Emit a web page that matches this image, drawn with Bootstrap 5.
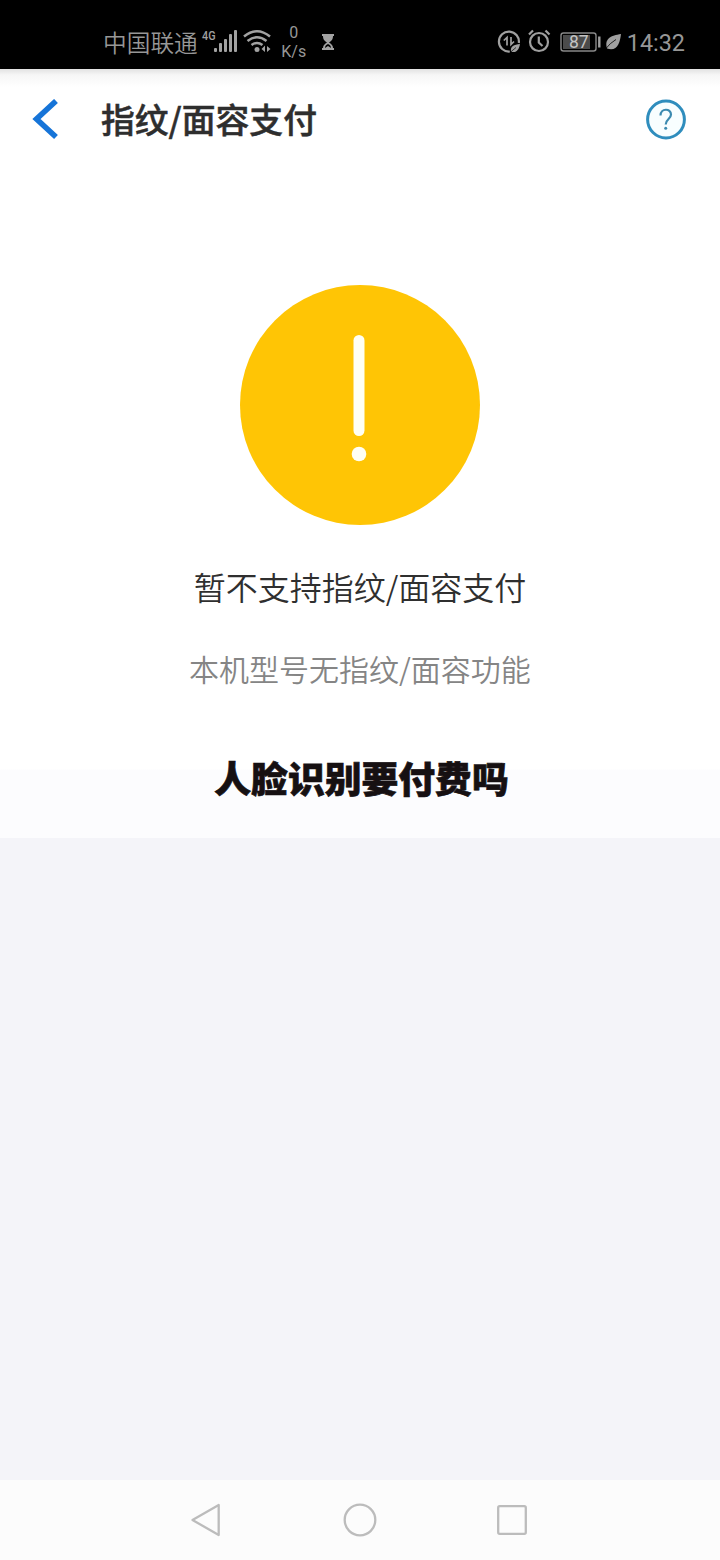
<!DOCTYPE html>
<html lang="zh-CN">
<head>
<meta charset="utf-8">
<meta name="viewport" content="width=device-width, initial-scale=1">
<title>指纹/面容支付</title>
<link href="https://cdn.jsdelivr.net/npm/bootstrap@5.3.0/dist/css/bootstrap.min.css" rel="stylesheet">
<style>
body { font-family: "Noto Sans CJK SC", sans-serif; background: #f4f4f9; height: 1560px; overflow: hidden; }
svg { display: block; flex: none; }
.status { height: 69px; background: #000; color: #979797; padding: 0 35px 0 103px; line-height: 1; }
.carrier { font-size: 23.7px; font-weight: 350; line-height: 36px; margin-top: 24px; }
.signals { margin-left: 3px; }
.rate { font: 16px/19px Roboto, sans-serif; width: 30px; margin: 23px 0 0 6px; }
.hourglass { margin-left: 12px; }
.clock { font: 23.4px/30px Roboto, sans-serif; margin: 28px 0 0 4px; }
.panel { height: 769px; background: linear-gradient(#e2e2e2 0, #f6f6f6 6px, #fff 18px, #fff 700px, #fcfcfe 701px, #fcfcfe 100%); }
.topbar { height: 101px; padding: 0 34px 0 32px; }
.heading { font-size: 33.8px; font-weight: 500; -webkit-text-stroke: .5px #2e2e2e; line-height: 50px; color: #2e2e2e; margin: -2px 0 0 41px; }
.notice { margin-top: 115px; }
.message { font-size: 32px; font-weight: 350; line-height: 48px; color: #2f2f2f; margin: 37px 0 0; }
.detail { font-size: 30px; font-weight: 350; line-height: 44px; color: #858585; margin: 36px 0 0; }
.caption-line { font-size: 36.8px; font-weight: 900; -webkit-text-stroke: .7px #161012; line-height: 54px; color: #161012; margin: 60px 0 0 3px; }
.sysnav { height: 80px; background: #fcfcfc; gap: 118px; }
</style>
<script src="https://cdn.jsdelivr.net/npm/bootstrap@5.3.0/dist/js/bootstrap.bundle.min.js"></script>
</head>
<body class="d-flex flex-column m-0">
<header class="status d-flex align-items-start">
  <span class="carrier text-nowrap">中国联通</span>
  <svg class="signals" width="72" height="69" viewBox="0 0 72 69">
    <text transform="translate(1 40) scale(.8 1)" font-family="Roboto" font-size="13.500" font-weight="500" fill="#a0a0a0">4G</text>
    <g fill="#a2a2a2"><rect x="13" y="48" width="3" height="4" rx="1"/><rect x="18" y="43" width="3" height="9" rx="1"/><rect x="23" y="39" width="3" height="13" rx="1"/><rect x="28" y="34" width="3" height="18" rx="1"/><rect x="33" y="30" width="3" height="22" rx="1"/></g>
    <g fill="none" stroke="#a2a2a2" stroke-width="2.500"><path d="M43 36.500Q56 26 69 36.500M46.500 41Q56 33.500 65.500 41M50.500 45Q56 41 61.500 45"/></g>
    <circle cx="56" cy="49.500" r="2.500" fill="#a2a2a2"/>
    <path d="M60.500 49l3.500-3.500v6.500zM66 46v6l3.500-3z" fill="#a2a2a2"/>
  </svg>
  <div class="rate text-center">0<br>K/s</div>
  <svg class="hourglass" width="14" height="69" viewBox="0 0 14 69"><path d="M1 34h12v2h-1c0 4-2 5-4 6.500C10 44 12 45 12 48h1v2H1v-2h1c0-3 2-4 4-5.500C4 41 2 40 2 36H1z" fill="#a2a2a2"/><path d="M4 48q0-3 3-4 3 1 3 4l-3-2z" fill="#000"/></svg>
  <div class="d-flex ms-auto">
    <svg width="126" height="69" viewBox="497 0 126 69" fill="none" stroke="#a0a0a0">
      <path d="M518.800 43a10 10 0 1 0-9 8.500" stroke-width="2.200"/>
      <path d="M503.800 40.500l3.200-3v8M511 37v7.500l3-3" stroke-width="1.700"/>
      <path d="M511 51.500c-1-5 3-7 9-7.500-1 6-4 9.500-9 7.500z" fill="#a0a0a0" stroke="none"/>
      <path d="M510 52.500l6-5" stroke="#000" stroke-width=".7"/>
      <circle cx="539" cy="42" r="9" stroke-width="2.200"/>
      <path d="M538.800 36.500v6l3.700 3.500M529 34.500l4-4M545.500 30.500l4 4" stroke-width="2.200"/>
      <rect x="561" y="33" width="35" height="18" rx="2.500" stroke-width="1.400" stroke="#888"/>
      <rect x="563" y="35" width="27" height="14" fill="#4b4b4b" stroke="none"/>
      <text x="569" y="48.200" font-family="Roboto" font-size="17.500" fill="#c4c4c4" stroke="none">87</text>
      <path d="M599.300 36.500v11" stroke-width="2.400"/>
      <path d="M607 48.500c-3-10 4-13 14-14.500-1 9-4 18-14 14.500z" fill="#a0a0a0" stroke="none"/>
      <path d="M605.500 49Q610 43 616 39.500" stroke="#000" stroke-width=".8"/>
    </svg>
    <span class="clock">14:32</span>
  </div>
</header>
<main class="panel">
  <nav class="topbar d-flex align-items-center">
    <svg width="28" height="42" viewBox="0 0 28 42"><path d="M24 2L4.500 20l19.500 18" fill="none" stroke="#1674d8" stroke-width="5.600"/></svg>
    <h1 class="heading">指纹/面容支付</h1>
    <svg class="ms-auto" width="40" height="42" viewBox="0 0 40 42"><circle cx="20" cy="20.500" r="18.400" fill="#f8feff" stroke="#2f8dbd" stroke-width="3"/><path d="M14.500 16.500c0-7.500 10.500-7.500 10.500-1 0 4.500-5.300 4.500-5.300 10" fill="none" stroke="#3b8ab0" stroke-width="2.200"/><circle cx="19.700" cy="29.200" r="1.500" fill="#3b8ab0"/></svg>
  </nav>
  <section class="notice d-flex flex-column align-items-center text-center">
    <svg width="240" height="240" viewBox="0 0 240 240"><circle cx="120" cy="120" r="120" fill="#ffc505"/><rect x="113.500" y="50" width="11" height="101" rx="5.500" fill="#fffff4"/><circle cx="119" cy="169" r="7.300" fill="#fffff4"/></svg>
    <p class="message">暂不支持指纹/面容支付</p>
    <p class="detail">本机型号无指纹/面容功能</p>
    <p class="caption-line">人脸识别要付费吗</p>
  </section>
</main>
<footer class="sysnav mt-auto d-flex justify-content-center align-items-center">
  <svg width="34" height="34" viewBox="0 0 34 34" fill="none" stroke="#bcbcbc" stroke-width="2.300" stroke-linejoin="round"><path d="M27.700 2v30L1.500 17z"/></svg>
  <svg width="34" height="34" viewBox="0 0 34 34" fill="none" stroke="#bcbcbc" stroke-width="2.300"><circle cx="17" cy="17" r="15.300"/></svg>
  <svg width="34" height="34" viewBox="0 0 34 34" fill="none" stroke="#bcbcbc" stroke-width="2.300"><rect x="3.200" y="3.200" width="27.600" height="27.600" rx="1.500"/></svg>
</footer>
</body>
</html>
